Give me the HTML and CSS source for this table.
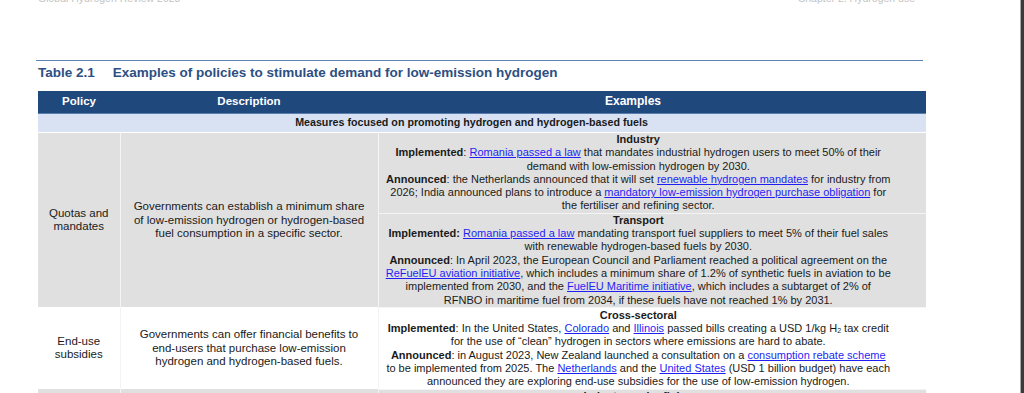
FILE: index.html
```html
<!DOCTYPE html>
<html lang="en">
<head>
<meta charset="utf-8">
<title>Table 2.1 Examples of policies to stimulate demand for low-emission hydrogen</title>
<link rel="stylesheet" href="styles.css">
</head>
<body>
<div class="page">
  <header class="running-head">
    <span>Global Hydrogen Review 2023</span>
    <span>Chapter 2. Hydrogen use</span>
  </header>
  <div class="rule"></div>
  <h2 class="caption"><span class="num">Table 2.1</span><span>Examples of policies to stimulate demand for low-emission hydrogen</span></h2>
  <table class="policy-table">
    <colgroup>
      <col class="c-policy">
      <col class="c-desc">
      <col class="c-ex">
    </colgroup>
    <thead>
      <tr class="head">
        <th>Policy</th>
        <th>Description</th>
        <th class="h-ex">Examples</th>
      </tr>
    </thead>
    <tbody>
      <tr class="section">
        <td colspan="3">Measures focused on promoting hydrogen and hydrogen-based fuels</td>
      </tr>
      <tr class="grey">
        <td rowspan="2" class="policy">Quotas and<br>mandates</td>
        <td rowspan="2" class="desc">Governments can establish a minimum share<br>of low-emission hydrogen or hydrogen-based<br>fuel consumption in a specific sector.</td>
        <td class="ex">
          <b>Industry</b><br>
          <b>Implemented</b>: <a href="#">Romania passed a law</a> that mandates industrial hydrogen users to meet 50% of their<br>demand with low-emission hydrogen by 2030.<br>
          <b>Announced</b>: the Netherlands announced that it will set <a href="#">renewable hydrogen mandates</a> for industry from<br>2026; India announced plans to introduce a <a href="#">mandatory low-emission hydrogen purchase obligation</a> for<br>the fertiliser and refining sector.
        </td>
      </tr>
      <tr class="grey">
        <td class="ex">
          <b>Transport</b><br>
          <b>Implemented:</b> <a href="#">Romania passed a law</a> mandating transport fuel suppliers to meet 5% of their fuel sales<br>with renewable hydrogen-based fuels by 2030.<br>
          <b>Announced</b>: In April 2023, the European Council and Parliament reached a political agreement on the<br><a href="#">ReFuelEU aviation initiative</a>, which includes a minimum share of 1.2% of synthetic fuels in aviation to be<br>implemented from 2030, and the <a href="#">FuelEU Maritime initiative</a>, which includes a subtarget of 2% of<br>RFNBO in maritime fuel from 2034, if these fuels have not reached 1% by 2031.
        </td>
      </tr>
      <tr class="white">
        <td class="policy">End-use<br>subsidies</td>
        <td class="desc">Governments can offer financial benefits to<br>end-users that purchase low-emission<br>hydrogen and hydrogen-based fuels.</td>
        <td class="ex">
          <b>Cross-sectoral</b><br>
          <b>Implemented</b>: In the United States, <a href="#">Colorado</a> and <a href="#">Illinois</a> passed bills creating a USD 1/kg H<sub>2</sub> tax credit<br>for the use of “clean” hydrogen in sectors where emissions are hard to abate.<br>
          <b>Announced</b>: in August 2023, New Zealand launched a consultation on a <a href="#">consumption rebate scheme</a><br>to be implemented from 2025. The <a href="#">Netherlands</a> and the <a href="#">United States</a> (USD 1 billion budget) have each<br>announced they are exploring end-use subsidies for the use of low-emission hydrogen.
        </td>
      </tr>
      <tr class="grey">
        <td class="policy"></td>
        <td class="desc"></td>
        <td class="ex"><b>Industry and refining</b></td>
      </tr>
    </tbody>
  </table>
</div>
<div class="window-edge"></div>
</body>
</html>
```

FILE: styles.css
```css
html, body {
  margin: 0;
  padding: 0;
  background: #ffffff;
}
body {
  font-family: "Liberation Sans", Arial, sans-serif;
  color: #1a1a1a;
  overflow: hidden;
}
.page {
  padding-left: 38px;
  width: 888px;
}
.running-head {
  display: flex;
  justify-content: space-between;
  font-size: 10.5px;
  line-height: 12px;
  color: #c4c4c4;
  margin-top: -8px;
  padding-right: 11px;
}
.rule {
  height: 1px;
  background: #5f82b4;
  margin-top: 56px;
  margin-left: -2px;
  width: 887px;
}
.caption {
  margin: 0;
  padding-top: 4px;
  height: 26px;
  font-size: 13.5px;
  line-height: 16px;
  font-weight: bold;
  color: #2d4f82;
  display: flex;
  gap: 18px;
}
.policy-table {
  width: 888px;
  border-collapse: collapse;
  table-layout: fixed;
  font-size: 11px;
  line-height: 13.3px;
}
.c-policy { width: 82px; }
.c-desc { width: 258px; }
.c-ex { width: 548px; }
.policy-table td,
.policy-table th {
  padding: 0;
  text-align: center;
  vertical-align: middle;
}
.head th {
  background: #1f497d;
  color: #ffffff;
  font-size: 11.5px;
  height: 22px;
  border-bottom: 1px solid #5a7db0;
}
.head th.h-ex {
  font-size: 12px;
  padding-right: 38px;
}
.section td {
  background: #d9e2f2;
  font-weight: bold;
  font-size: 10.7px;
  height: 18px;
  padding-right: 21px;
  border-bottom: 1px solid #ffffff;
}
.grey td {
  background: #e0e0e0;
}
.white td {
  background: #ffffff;
}
.policy-table tbody td.policy,
.policy-table tbody td.desc {
  font-size: 11.5px;
  border-right: 1px solid #f4f4f4;
}
.policy-table tbody td.ex {
  padding-left: 2px;
  padding-right: 30px;
  border-bottom: 1px solid #f4f4f4;
}
.policy-table tbody tr.white td.ex {
  padding-top: 1px;
}
a {
  color: #1f1ff5;
  text-decoration: underline;
}
sub {
  font-size: 7px;
  line-height: 0;
  vertical-align: -1px;
}
.window-edge {
  position: fixed;
  top: 0;
  right: 0;
  width: 3px;
  height: 100%;
  background: #3a3a3a;
  border-left: 1px solid #a8a8a8;
}
```
